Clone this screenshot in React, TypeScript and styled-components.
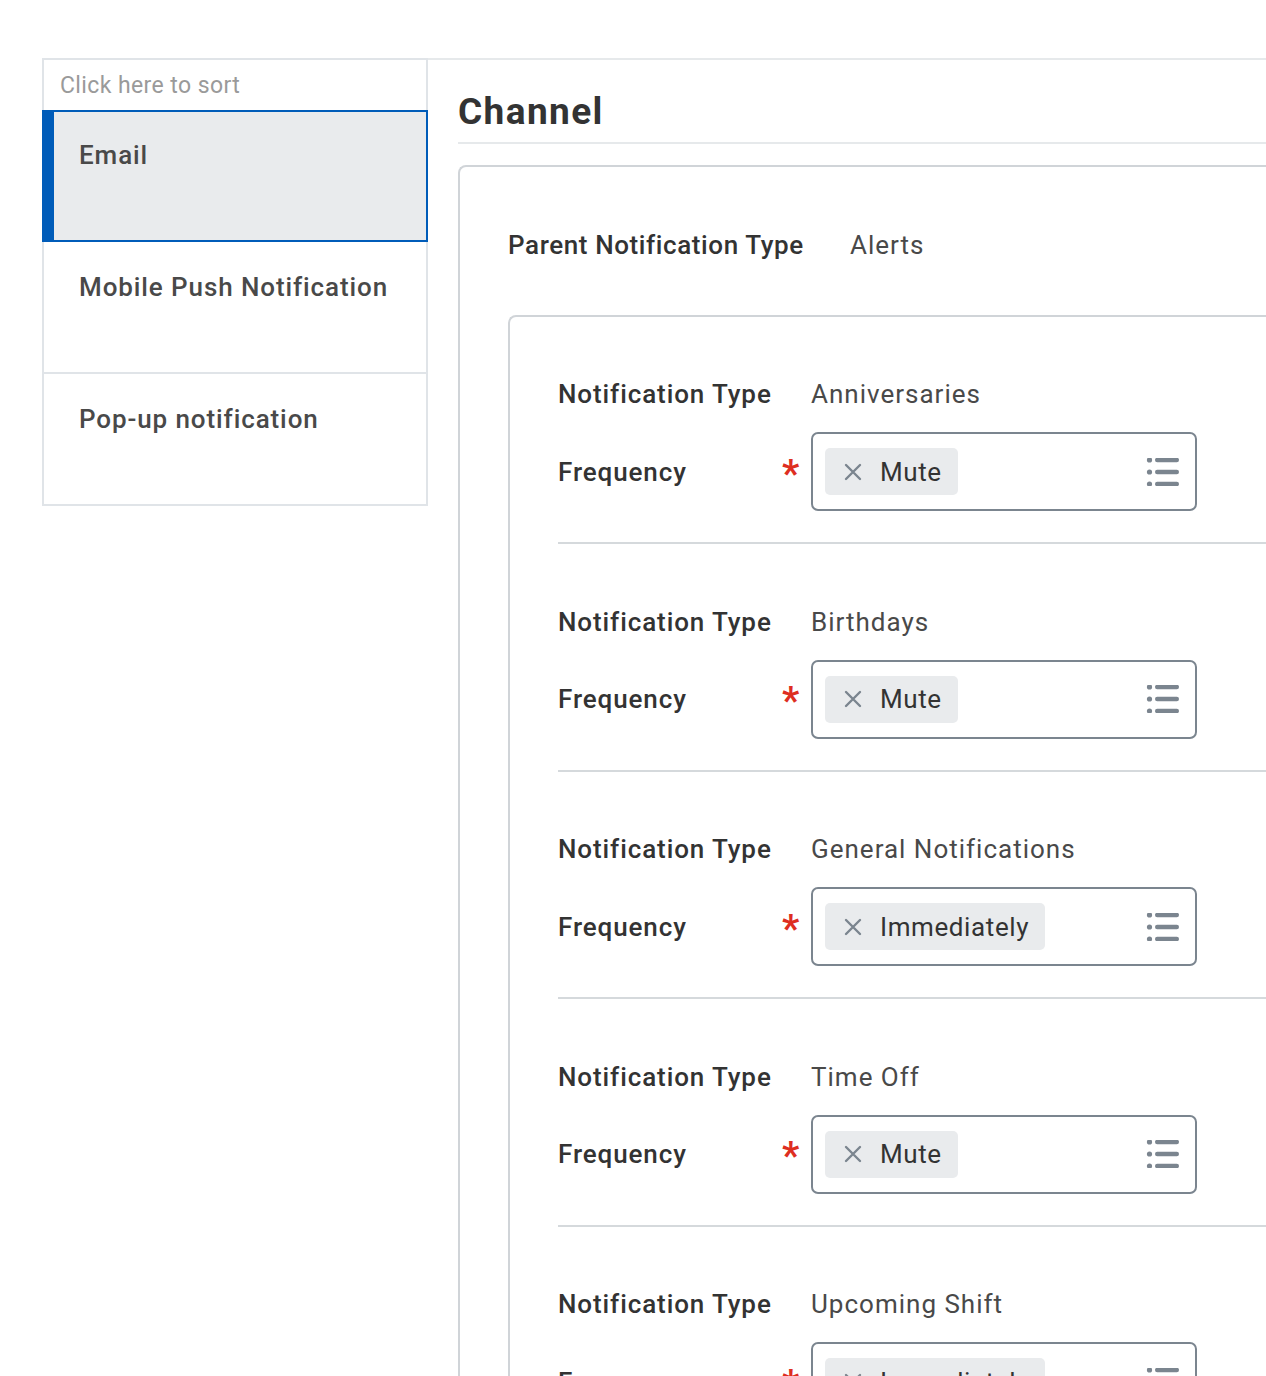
import React from "react";
import styled, { createGlobalStyle } from "styled-components";

const Global = createGlobalStyle`
  html, body { margin: 0; padding: 0; background: #fff; overflow-x: hidden; }
  body { font-family: Roboto, "Liberation Sans", Arial, sans-serif; color: #333; }
  * { box-sizing: border-box; }
`;

const Page = styled.div`
  display: flex;
  align-items: flex-start;
  padding: 58px 0 0 42px;
  width: 1266px;
  overflow: hidden;
`;

const SidePanel = styled.div`
  width: 386px;
  flex: none;
  display: flex;
  flex-direction: column;
`;

const SortHeader = styled.div`
  height: 52px;
  border: 2px solid #e0e4e8;
  border-bottom: none;
  padding-left: 16px;
  display: flex;
  align-items: center;
  font-size: 23px;
  letter-spacing: 0.4px;
  color: #9a9a9a;
`;

const ChannelRow = styled.div<{ $selected?: boolean }>`
  height: 132px;
  border: 2px solid ${(p) => (p.$selected ? "#005cb9" : "#e0e4e8")};
  border-top: ${(p) => (p.$selected ? "2px solid #005cb9" : "none")};
  border-left-width: ${(p) => (p.$selected ? "12px" : "2px")};
  background: ${(p) => (p.$selected ? "#e9ebed" : "#fff")};
  padding: ${(p) => (p.$selected ? "26px 0 0 25px" : "28px 0 0 35px")};
  font-size: 26px;
  font-weight: 500;
  letter-spacing: 0.9px;
  color: #494949;
  line-height: 34px;
`;

const Main = styled.div`
  flex: 1;
  border-top: 2px solid #e6e9eb;
  padding-left: 30px;
  min-width: 0;
`;

const Title = styled.h1`
  margin: 0;
  height: 84px;
  display: flex;
  align-items: center;
  padding-top: 20px;
  font-size: 37px;
  font-weight: 700;
  letter-spacing: 1.4px;
  color: #333;
  border-bottom: 2px solid #e6e9eb;
`;

const OuterCard = styled.div`
  margin-top: 21px;
  width: 900px;
  border: 2px solid #d0d4d8;
  border-right: none;
  border-bottom: none;
  border-radius: 8px 0 0 0;
  padding: 58px 0 0 48px;
`;

const FieldRow = styled.div`
  display: flex;
  align-items: center;
  height: 40px;
`;

const ParentLabel = styled.div`
  width: 342px;
  font-size: 26px;
  font-weight: 500;
  letter-spacing: 0.6px;
  color: #333;
`;

const Value = styled.div`
  font-size: 26px;
  font-weight: 400;
  letter-spacing: 1px;
  color: #494949;
`;

const InnerCard = styled.div`
  margin-top: 50px;
  border: 2px solid #d0d4d8;
  border-right: none;
  border-bottom: none;
  border-radius: 8px 0 0 0;
  padding-left: 48px;
`;

const Section = styled.div<{ $first?: boolean }>`
  padding: ${(p) => (p.$first ? "57px" : "57.5px")} 0 31px 0;
  border-bottom: 2px solid #d5d9dc;
`;

const Label = styled.div`
  width: 224px;
  flex: none;
  font-size: 26px;
  font-weight: 500;
  letter-spacing: 0.9px;
  color: #333;
`;

const FreqRow = styled.div`
  display: flex;
  align-items: center;
  margin-top: 18px;
  height: 79px;
`;

const Required = styled.div`
  width: 29px;
  flex: none;
  color: #de2e21;
  font-size: 38px;
  font-weight: 700;
  line-height: 1;
  padding-top: 4px;
  display: flex;
  justify-content: flex-start;
`;

const SelectBox = styled.div`
  width: 386px;
  height: 79px;
  border: 2px solid #7b858f;
  border-radius: 7px;
  display: flex;
  align-items: center;
  justify-content: space-between;
  padding: 0 15px 0 12px;
`;

const Chip = styled.div`
  height: 47px;
  background: #e9ebed;
  border-radius: 5px;
  display: flex;
  align-items: center;
  padding: 0 16px 0 19px;
  gap: 18px;
  font-size: 26px;
  color: #333;
  letter-spacing: 0.6px;
`;

const XIcon = () => (
  <svg width="18" height="18" viewBox="0 0 18 18">
    <path d="M2 2 L16 16 M16 2 L2 16" stroke="#7b858f" strokeWidth="2.4" strokeLinecap="round" />
  </svg>
);

const ListIcon = () => (
  <svg width="34" height="28" viewBox="0 0 34 28">
    {[2, 14, 26].map((y) => (
      <g key={y}>
        <circle cx="3.5" cy={y} r="2.6" fill="#7b858f" />
        <rect x="9" y={y - 2.2} width="24" height="4.4" rx="2.2" fill="#7b858f" />
      </g>
    ))}
  </svg>
);

const items = [
  { type: "Anniversaries", freq: "Mute" },
  { type: "Birthdays", freq: "Mute" },
  { type: "General Notifications", freq: "Immediately" },
  { type: "Time Off", freq: "Mute" },
  { type: "Upcoming Shift", freq: "Immediately" },
];

export default function App() {
  return (
    <>
      <Global />
      <Page>
        <SidePanel>
          <SortHeader>Click here to sort</SortHeader>
          <ChannelRow $selected>Email</ChannelRow>
          <ChannelRow>Mobile Push Notification</ChannelRow>
          <ChannelRow>Pop-up notification</ChannelRow>
        </SidePanel>
        <Main>
          <Title>Channel</Title>
          <OuterCard>
            <FieldRow>
              <ParentLabel>Parent Notification Type</ParentLabel>
              <Value>Alerts</Value>
            </FieldRow>
            <InnerCard>
              {items.map((it, i) => (
                <Section key={it.type} $first={i === 0}>
                  <FieldRow>
                    <Label>Notification Type</Label>
                    <Required />
                    <Value>{it.type}</Value>
                  </FieldRow>
                  <FreqRow>
                    <Label>Frequency</Label>
                    <Required>*</Required>
                    <SelectBox>
                      <Chip>
                        <XIcon />
                        <span>{it.freq}</span>
                      </Chip>
                      <ListIcon />
                    </SelectBox>
                  </FreqRow>
                </Section>
              ))}
            </InnerCard>
          </OuterCard>
        </Main>
      </Page>
    </>
  );
}
